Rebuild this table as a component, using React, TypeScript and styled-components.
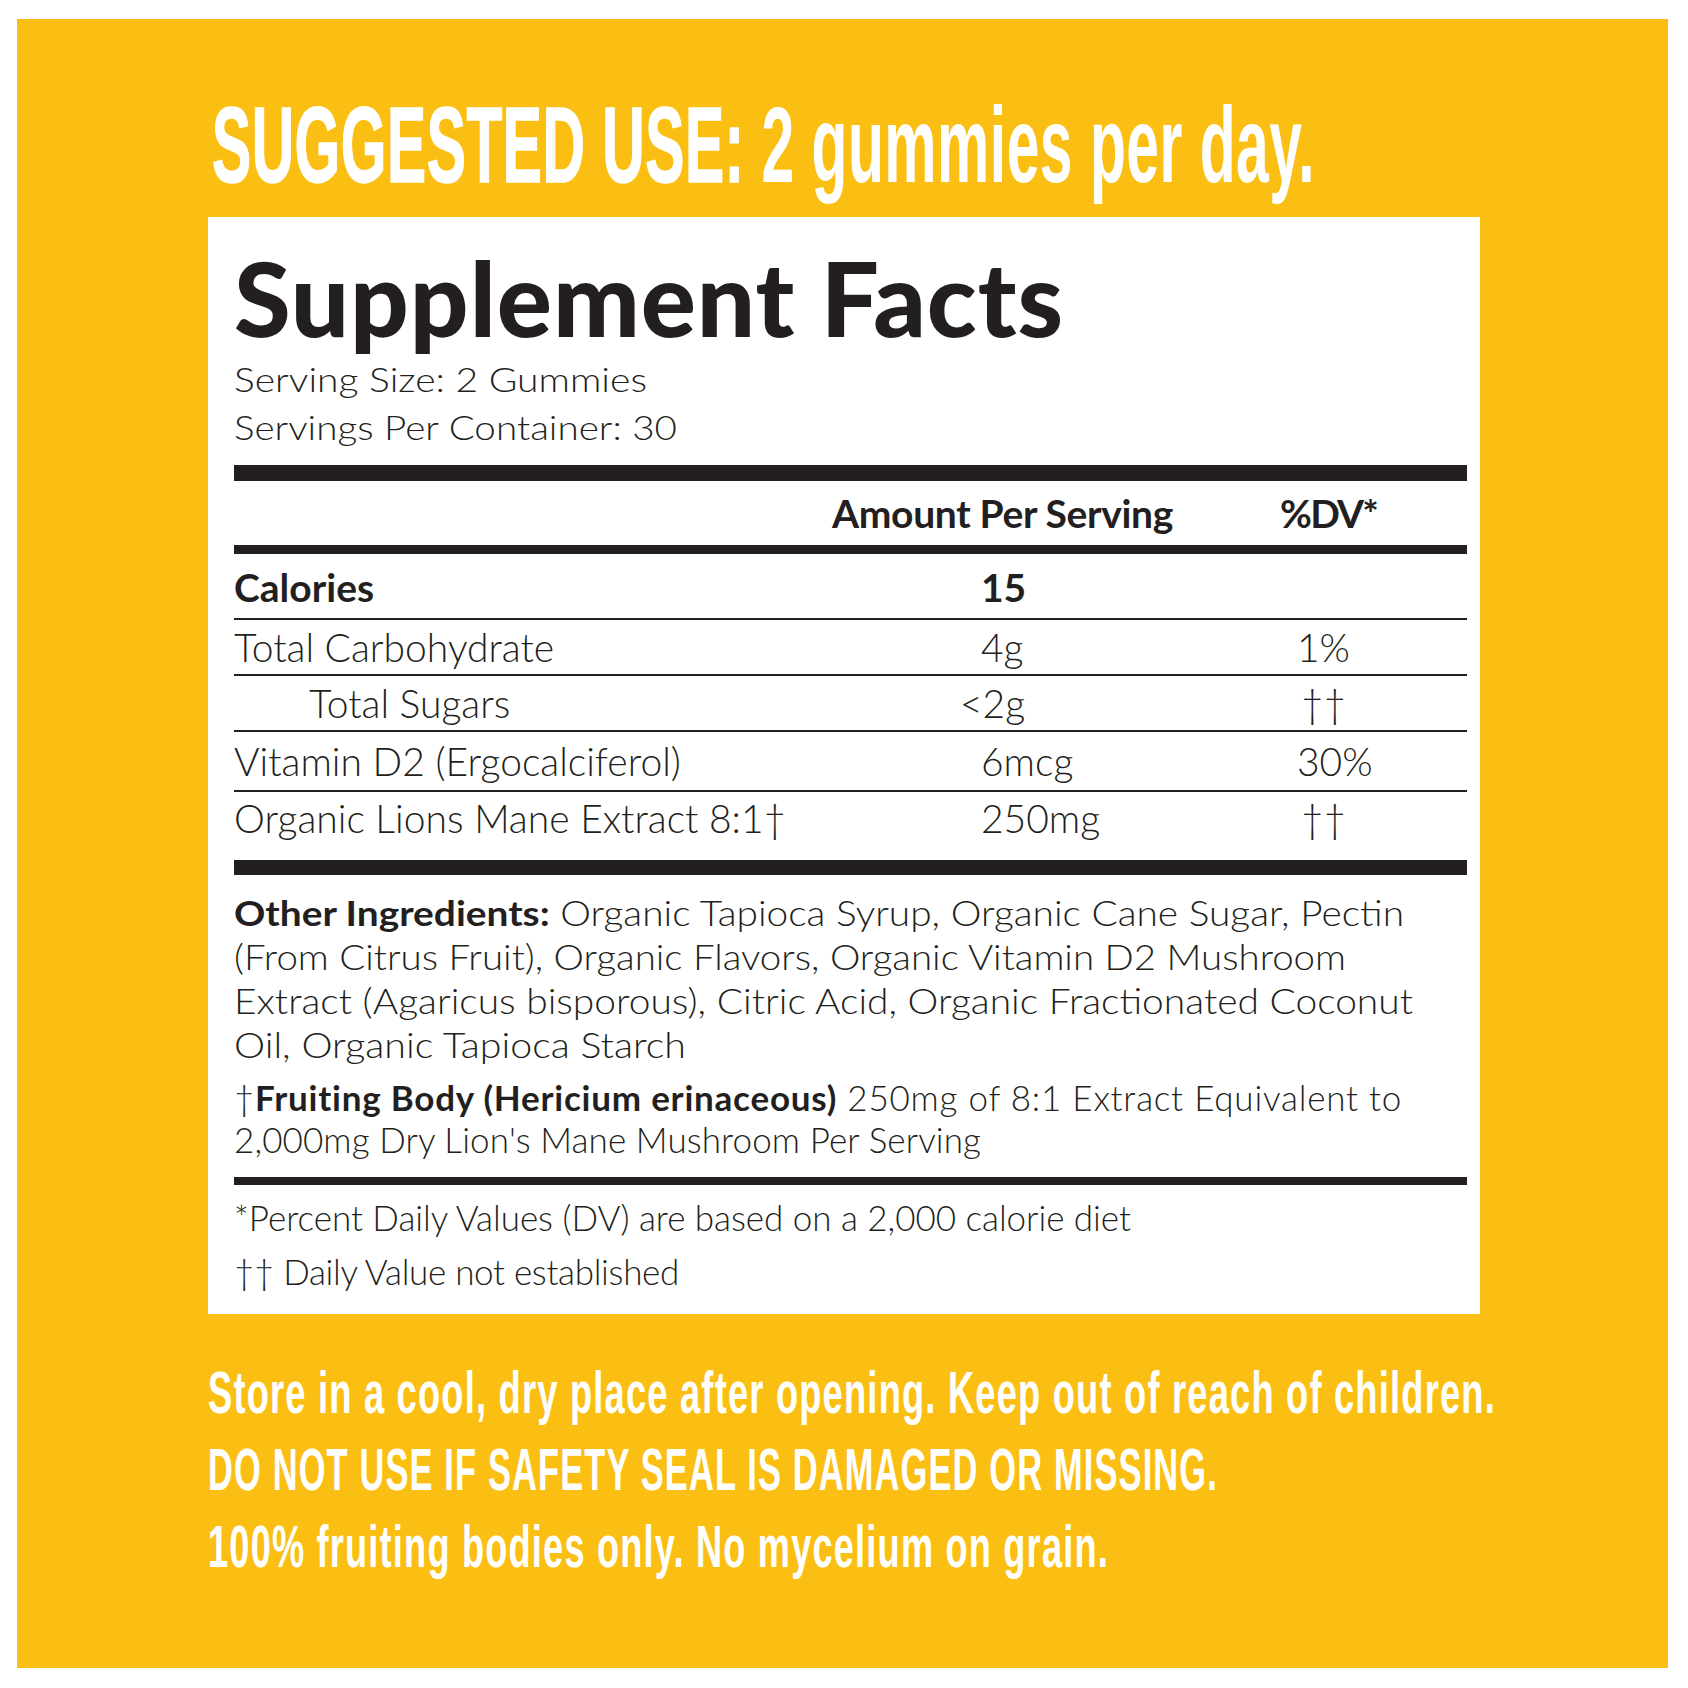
import React, { useLayoutEffect, useRef, useState } from 'react';
import styled, { createGlobalStyle } from 'styled-components';

const INK = '#231f20';
const GOLD = '#fbbf14';

const Global = createGlobalStyle`
  html, body { margin: 0; padding: 0; background: #ffffff; }
  body { font-family: Lato, "Liberation Sans", sans-serif; color: ${INK}; }
`;

const Page = styled.div`
  width: 1688px;
  height: 1688px;
  box-sizing: border-box;
  padding: 19px 20px 20px 17px;
  background: #ffffff;
  overflow: hidden;
`;

const Panel = styled.main`
  height: 100%;
  box-sizing: border-box;
  background: ${GOLD};
  padding: 72px 0 0 191px;
  display: flex;
  flex-direction: column;
  align-items: flex-start;
`;

const Banner = styled.div<{ $size: number; $lh: number; $mt?: number; $ml?: number; $track?: number }>`
  font-family: "Liberation Sans Narrow", "Liberation Sans", Arial, sans-serif;
  font-weight: 700;
  font-size: ${(p) => p.$size}px;
  line-height: ${(p) => p.$lh}px;
  letter-spacing: ${(p) => p.$track ?? 0}px;
  margin-top: ${(p) => p.$mt ?? 0}px;
  margin-left: ${(p) => p.$ml ?? 0}px;
  color: #ffffff;
  white-space: nowrap;
`;

const Heavy = styled.span<{ $stroke: number }>`
  -webkit-text-stroke: ${(p) => p.$stroke}px #ffffff;
`;

const FitSpan = styled.span`
  display: inline-block;
  white-space: nowrap;
  transform-origin: 0 50%;
`;

type FitProps = { width: number; mode?: 'scale' | 'spacing'; children: React.ReactNode };

function Fit({ width, mode = 'spacing', children }: FitProps) {
  const ref = useRef<HTMLSpanElement>(null);
  const applied = useRef(mode === 'scale' ? 1 : 0);
  const [adj, setAdj] = useState<{ v: number; natural: number }>({
    v: mode === 'scale' ? 1 : 0,
    natural: width,
  });

  useLayoutEffect(() => {
    const measure = () => {
      const el = ref.current;
      if (!el) return;
      const rect = el.getBoundingClientRect().width;
      if (mode === 'scale') {
        const natural = rect / applied.current;
        const s = width / natural;
        applied.current = s;
        setAdj({ v: s, natural });
      } else {
        const n = (el.textContent || '').length;
        const natural = rect - n * applied.current;
        const ls = (width - natural) / n;
        applied.current = ls;
        setAdj({ v: ls, natural });
      }
    };
    measure();
    if (document.fonts) document.fonts.ready.then(measure);
  }, [width, mode]);

  const style: React.CSSProperties =
    mode === 'scale'
      ? { transform: `scaleX(${adj.v})`, marginRight: `${width - adj.natural}px` }
      : { letterSpacing: `${adj.v}px` };
  return (
    <FitSpan ref={ref} style={style}>
      {children}
    </FitSpan>
  );
}

const Card = styled.section`
  width: 1272px;
  box-sizing: border-box;
  margin-top: 18px;
  padding: 29px 13px 16.5px 26px;
  background: #ffffff;
  color: ${INK};
  font-family: Lato, "Liberation Sans", sans-serif;
`;

const Heading = styled.h1`
  margin: 0;
  font-family: Lato, "Liberation Sans", sans-serif;
  font-weight: 900;
  font-size: 103px;
  line-height: 103px;
  white-space: nowrap;
`;

const ServingBlock = styled.div`
  margin-top: 6px;
  font-weight: 300;
  font-size: 34px;
  line-height: 48px;
  white-space: nowrap;
`;

const Line = styled.div``;

const Rule = styled.div<{ $h: number; $mt?: number }>`
  height: ${(p) => p.$h}px;
  margin-top: ${(p) => p.$mt ?? 0}px;
  background: ${INK};
`;

const HeaderRow = styled.div`
  display: grid;
  grid-template-columns: 598px 448px 1fr;
  font-size: 39px;
  font-weight: 700;
  line-height: 64px;
  white-space: nowrap;
`;

const Row = styled.div<{ $lh: number; $pt?: number; $pb?: number; $bold?: boolean }>`
  display: grid;
  grid-template-columns: 747px 316px 1fr;
  font-size: 39px;
  font-weight: ${(p) => (p.$bold ? 700 : 300)};
  line-height: ${(p) => p.$lh}px;
  padding-top: ${(p) => p.$pt ?? 0}px;
  padding-bottom: ${(p) => p.$pb ?? 0}px;
  white-space: nowrap;
`;

const Name = styled.span<{ $indent?: number }>`
  padding-left: ${(p) => p.$indent ?? 0}px;
`;

const Amount = styled.span<{ $shift?: number }>`
  margin-left: ${(p) => -(p.$shift ?? 0)}px;
`;

const Dv = styled.span<{ $indent?: number }>`
  padding-left: ${(p) => p.$indent ?? 0}px;
`;

const Para = styled.div<{ $lh: number; $mt: number }>`
  font-size: 35px;
  font-weight: 300;
  line-height: ${(p) => p.$lh}px;
  margin-top: ${(p) => p.$mt}px;
  white-space: nowrap;
`;

const Strong = styled.strong`
  font-weight: 700;
`;

type Fact = {
  name: string;
  amount: string;
  dv: string;
  lh: number;
  pt?: number;
  pb?: number;
  bold?: boolean;
  indent?: number;
  shift?: number;
  dvIndent?: number;
};

const facts: Fact[] = [
  { name: 'Calories', amount: '15', dv: '', lh: 62, pt: 2, bold: true },
  { name: 'Total Carbohydrate', amount: '4g', dv: '1%', lh: 54 },
  { name: 'Total Sugars', amount: '<2g', dv: '††', lh: 54, indent: 75, shift: 21, dvIndent: 4 },
  { name: 'Vitamin D2 (Ergocalciferol)', amount: '6mcg', dv: '30%', lh: 58 },
  { name: 'Organic Lions Mane Extract 8:1†', amount: '250mg', dv: '††', lh: 52, pb: 16, dvIndent: 4 },
];

export default function App() {
  return (
    <>
      <Global />
      <Page>
        <Panel>
          <Banner $size={108} $lh={108} $ml={4} $track={1}>
            <Fit width={1103} mode="scale">
              <Heavy $stroke={1.5}>SUGGESTED USE:</Heavy> 2 gummies per day.
            </Fit>
          </Banner>

          <Card>
            <Heading>
              <Fit width={830}>Supplement Facts</Fit>
            </Heading>
            <ServingBlock>
              <Line>
                <Fit width={413} mode="scale">Serving Size: 2 Gummies</Fit>
              </Line>
              <Line>
                <Fit width={443} mode="scale">Servings Per Container: 30</Fit>
              </Line>
            </ServingBlock>

            <Rule $h={16} $mt={14} />
            <HeaderRow>
              <span />
              <span>
                <Fit width={341}>Amount Per Serving</Fit>
              </span>
              <span>
                <Fit width={97}>%DV*</Fit>
              </span>
            </HeaderRow>
            <Rule $h={9} />

            {facts.map((f, i) => (
              <React.Fragment key={f.name}>
                <Row $lh={f.lh} $pt={f.pt} $pb={f.pb} $bold={f.bold}>
                  <Name $indent={f.indent}>{f.name}</Name>
                  <span>
                    <Amount $shift={f.shift}>{f.amount}</Amount>
                  </span>
                  <Dv $indent={f.dvIndent}>{f.dv}</Dv>
                </Row>
                {i < facts.length - 1 ? <Rule $h={2} /> : <Rule $h={15} />}
              </React.Fragment>
            ))}

            <Para $lh={44} $mt={15}>
              <Line>
                <Fit width={1170} mode="scale">
                  <Strong>Other Ingredients:</Strong> Organic Tapioca Syrup, Organic Cane Sugar, Pectin
                </Fit>
              </Line>
              <Line>
                <Fit width={1112} mode="scale">(From Citrus Fruit), Organic Flavors, Organic Vitamin D2 Mushroom</Fit>
              </Line>
              <Line>
                <Fit width={1179} mode="scale">Extract (Agaricus bisporous), Citric Acid, Organic Fractionated Coconut</Fit>
              </Line>
              <Line>
                <Fit width={452} mode="scale">Oil, Organic Tapioca Starch</Fit>
              </Line>
            </Para>

            <Para $lh={42} $mt={9.5}>
              <Line>
                <Fit width={1168}>
                  †<Strong>Fruiting Body (Hericium erinaceous)</Strong> 250mg of 8:1 Extract Equivalent to
                </Fit>
              </Line>
              <Line>
                <Fit width={747}>2,000mg Dry Lion's Mane Mushroom Per Serving</Fit>
              </Line>
            </Para>

            <Rule $h={8} $mt={17.5} />

            <Para $lh={54} $mt={4.5}>
              <Line>
                <Fit width={897}>*Percent Daily Values (DV) are based on a 2,000 calorie diet</Fit>
              </Line>
              <Line>
                <Fit width={445}>†† Daily Value not established</Fit>
              </Line>
            </Para>
          </Card>

          <Banner $size={60} $lh={77} $mt={40} $track={2}>
            <Line>
              <Fit width={1288} mode="scale">
                Store in a cool, dry place after opening. Keep out of reach of children.
              </Fit>
            </Line>
            <Line>
              <Fit width={1010} mode="scale">
                DO NOT USE IF SAFETY SEAL IS DAMAGED OR MISSING.
              </Fit>
            </Line>
            <Line>
              <Fit width={901} mode="scale">
                100% fruiting bodies only. No mycelium on grain.
              </Fit>
            </Line>
          </Banner>
        </Panel>
      </Page>
    </>
  );
}
